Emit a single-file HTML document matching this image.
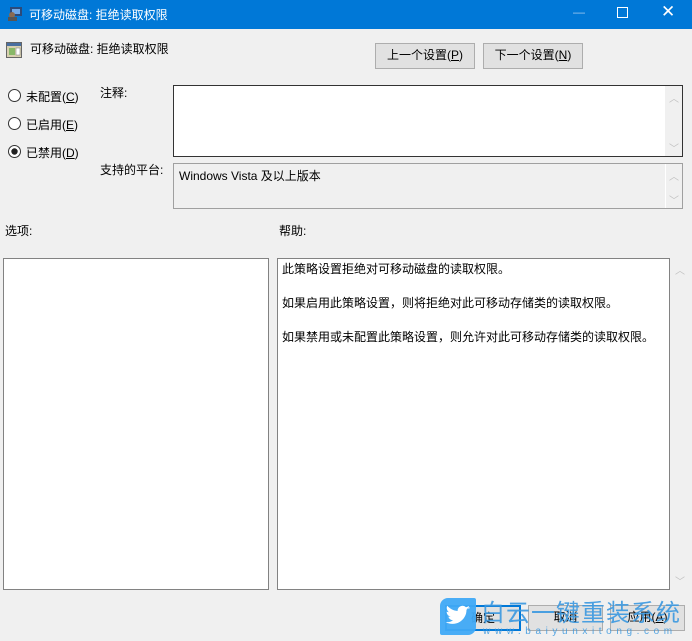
<!DOCTYPE html><html><head><meta charset="utf-8"><style>
*{margin:0;padding:0;box-sizing:border-box}
body{width:692px;height:641px;background:#f0f0f0;position:relative;overflow:hidden;font-family:"Liberation Sans","Noto Sans CJK SC",sans-serif;font-size:12px;color:#000}
.a{position:absolute;white-space:nowrap}
.btn{position:absolute;background:#e1e1e1;border:1px solid #adadad;text-align:center;line-height:23px;font-size:12px}
.sb{position:absolute;color:#c0c0c0;font-size:10px;text-align:center;width:16px}
</style></head><body>
<div class="a" style="left:0;top:0;width:692px;height:29px;background:#0078d7"></div>
<svg class="a" style="left:7px;top:6px" width="16" height="15"><rect x="3" y="1" width="12" height="9" fill="#2c4a7a"/><rect x="5" y="3" width="8" height="5" fill="#6fa8e8"/><circle cx="5" cy="9" r="3" fill="#8a6a50"/><rect x="1" y="11" width="9" height="4" fill="#555"/></svg>
<div class="a" style="left:29px;top:6px;color:#fff;font-size:12px">可移动磁盘: 拒绝读取权限</div>
<div class="a" style="left:573px;top:5px;color:#9cc6ef;font-size:12px">—</div>
<div class="a" style="left:617px;top:7px;width:11px;height:11px;border:1px solid #fff"></div>
<div class="a" style="left:661px;top:2px;color:#fff;font-size:17px">✕</div>
<svg class="a" style="left:6px;top:42px" width="16" height="16"><rect x="0.5" y="0.5" width="15" height="15" fill="#d8d0b0" stroke="#666"/><rect x="1" y="1" width="14" height="3" fill="#4a6fa0"/><rect x="3" y="6" width="6" height="7" fill="#88b868"/><rect x="10" y="6" width="4" height="7" fill="#fff" stroke="#777" stroke-width=".5"/></svg>
<div class="a" style="left:30px;top:40px">可移动磁盘: 拒绝读取权限</div>
<div class="btn" style="left:375px;top:43px;width:100px;height:26px">上一个设置(<u>P</u>)</div>
<div class="btn" style="left:483px;top:43px;width:100px;height:26px">下一个设置(<u>N</u>)</div>
<svg class="a" style="left:8px;top:89px" width="14" height="72"><circle cx="6.5" cy="6.5" r="6" fill="#fff" stroke="#333"/><circle cx="6.5" cy="34.5" r="6" fill="#fff" stroke="#333"/><circle cx="6.5" cy="62.5" r="6" fill="#fff" stroke="#333"/><circle cx="6.5" cy="62.5" r="3.2" fill="#222"/></svg>
<div class="a" style="left:26px;top:88px">未配置(<u>C</u>)</div>
<div class="a" style="left:26px;top:116px">已启用(<u>E</u>)</div>
<div class="a" style="left:26px;top:144px">已禁用(<u>D</u>)</div>
<div class="a" style="left:100px;top:84px">注释:</div>
<div class="a" style="left:100px;top:161px">支持的平台:</div>
<div class="a" style="left:173px;top:85px;width:510px;height:72px;background:#fff;border:1px solid #333"></div>
<div class="a" style="left:665px;top:86px;width:17px;height:70px;background:#f0f0f0"></div>
<div class="sb" style="left:666px;top:90px">︿</div><div class="sb" style="left:666px;top:140px">﹀</div>
<div class="a" style="left:173px;top:163px;width:510px;height:46px;border:1px solid #a0a0a0"></div>
<div class="a" style="left:665px;top:164px;width:17px;height:44px;border-left:1px solid #fff"></div>
<div class="sb" style="left:666px;top:168px">︿</div><div class="sb" style="left:666px;top:192px">﹀</div>
<div class="a" style="left:179px;top:167px">Windows Vista 及以上版本</div>
<div class="a" style="left:5px;top:222px">选项:</div>
<div class="a" style="left:279px;top:222px">帮助:</div>
<div class="a" style="left:3px;top:258px;width:266px;height:332px;background:#fff;border:1px solid #828282"></div>
<div class="a" style="left:277px;top:258px;width:393px;height:332px;background:#fff;border:1px solid #828282;padding:2px 4px;line-height:17px">此策略设置拒绝对可移动磁盘的读取权限。<br><br>如果启用此策略设置，则将拒绝对此可移动存储类的读取权限。<br><br>如果禁用或未配置此策略设置，则允许对此可移动存储类的读取权限。</div>
<div class="sb" style="left:672px;top:262px">︿</div><div class="sb" style="left:672px;top:573px">﹀</div>
<div class="btn" style="left:445px;top:605px;width:76px;height:26px;border:2px solid #0078d7">确定</div>
<div class="btn" style="left:528px;top:605px;width:75px;height:26px">取消</div>
<div class="btn" style="left:610px;top:605px;width:75px;height:26px">应用(<u>A</u>)</div>
<div class="a" style="left:440px;top:598px;width:36px;height:37px;background:#3fa9f5;border-radius:8px 2px 8px 2px;opacity:.95"></div>
<svg class="a" style="left:444px;top:604px" width="28" height="24"><path d="M26 4c-1 .5-2 .7-3 .8 1-.7 2-1.600 2-2.800-1 .6-2 1-3 1.200A5 5 0 0 0 13.600 7C9.500 6.800 5.800 4.800 3.300 1.800c-1.400 2.400 0 5.200 1.600 6.400-.8 0-1.600-.3-2.300-.6 0 2.500 1.800 4.500 4 5-.7.2-1.500.2-2.200.1.600 2 2.500 3.400 4.600 3.500A10 10 0 0 1 1.500 18a14 14 0 0 0 21-12.300c1-.7 1.800-1.500 2.500-2.400z" fill="#fff"/></svg>
<div class="a" style="left:481px;top:596px;color:#3a98e0;font-size:24px;letter-spacing:1px;opacity:.9;font-family:'Noto Sans CJK SC',sans-serif;line-height:30px">白云一键重装系统</div>
<div class="a" style="left:483px;top:626px;color:#3a98e0;font-size:10px;letter-spacing:4.6px;opacity:.85">www.baiyunxitong.com</div>
</body></html>
